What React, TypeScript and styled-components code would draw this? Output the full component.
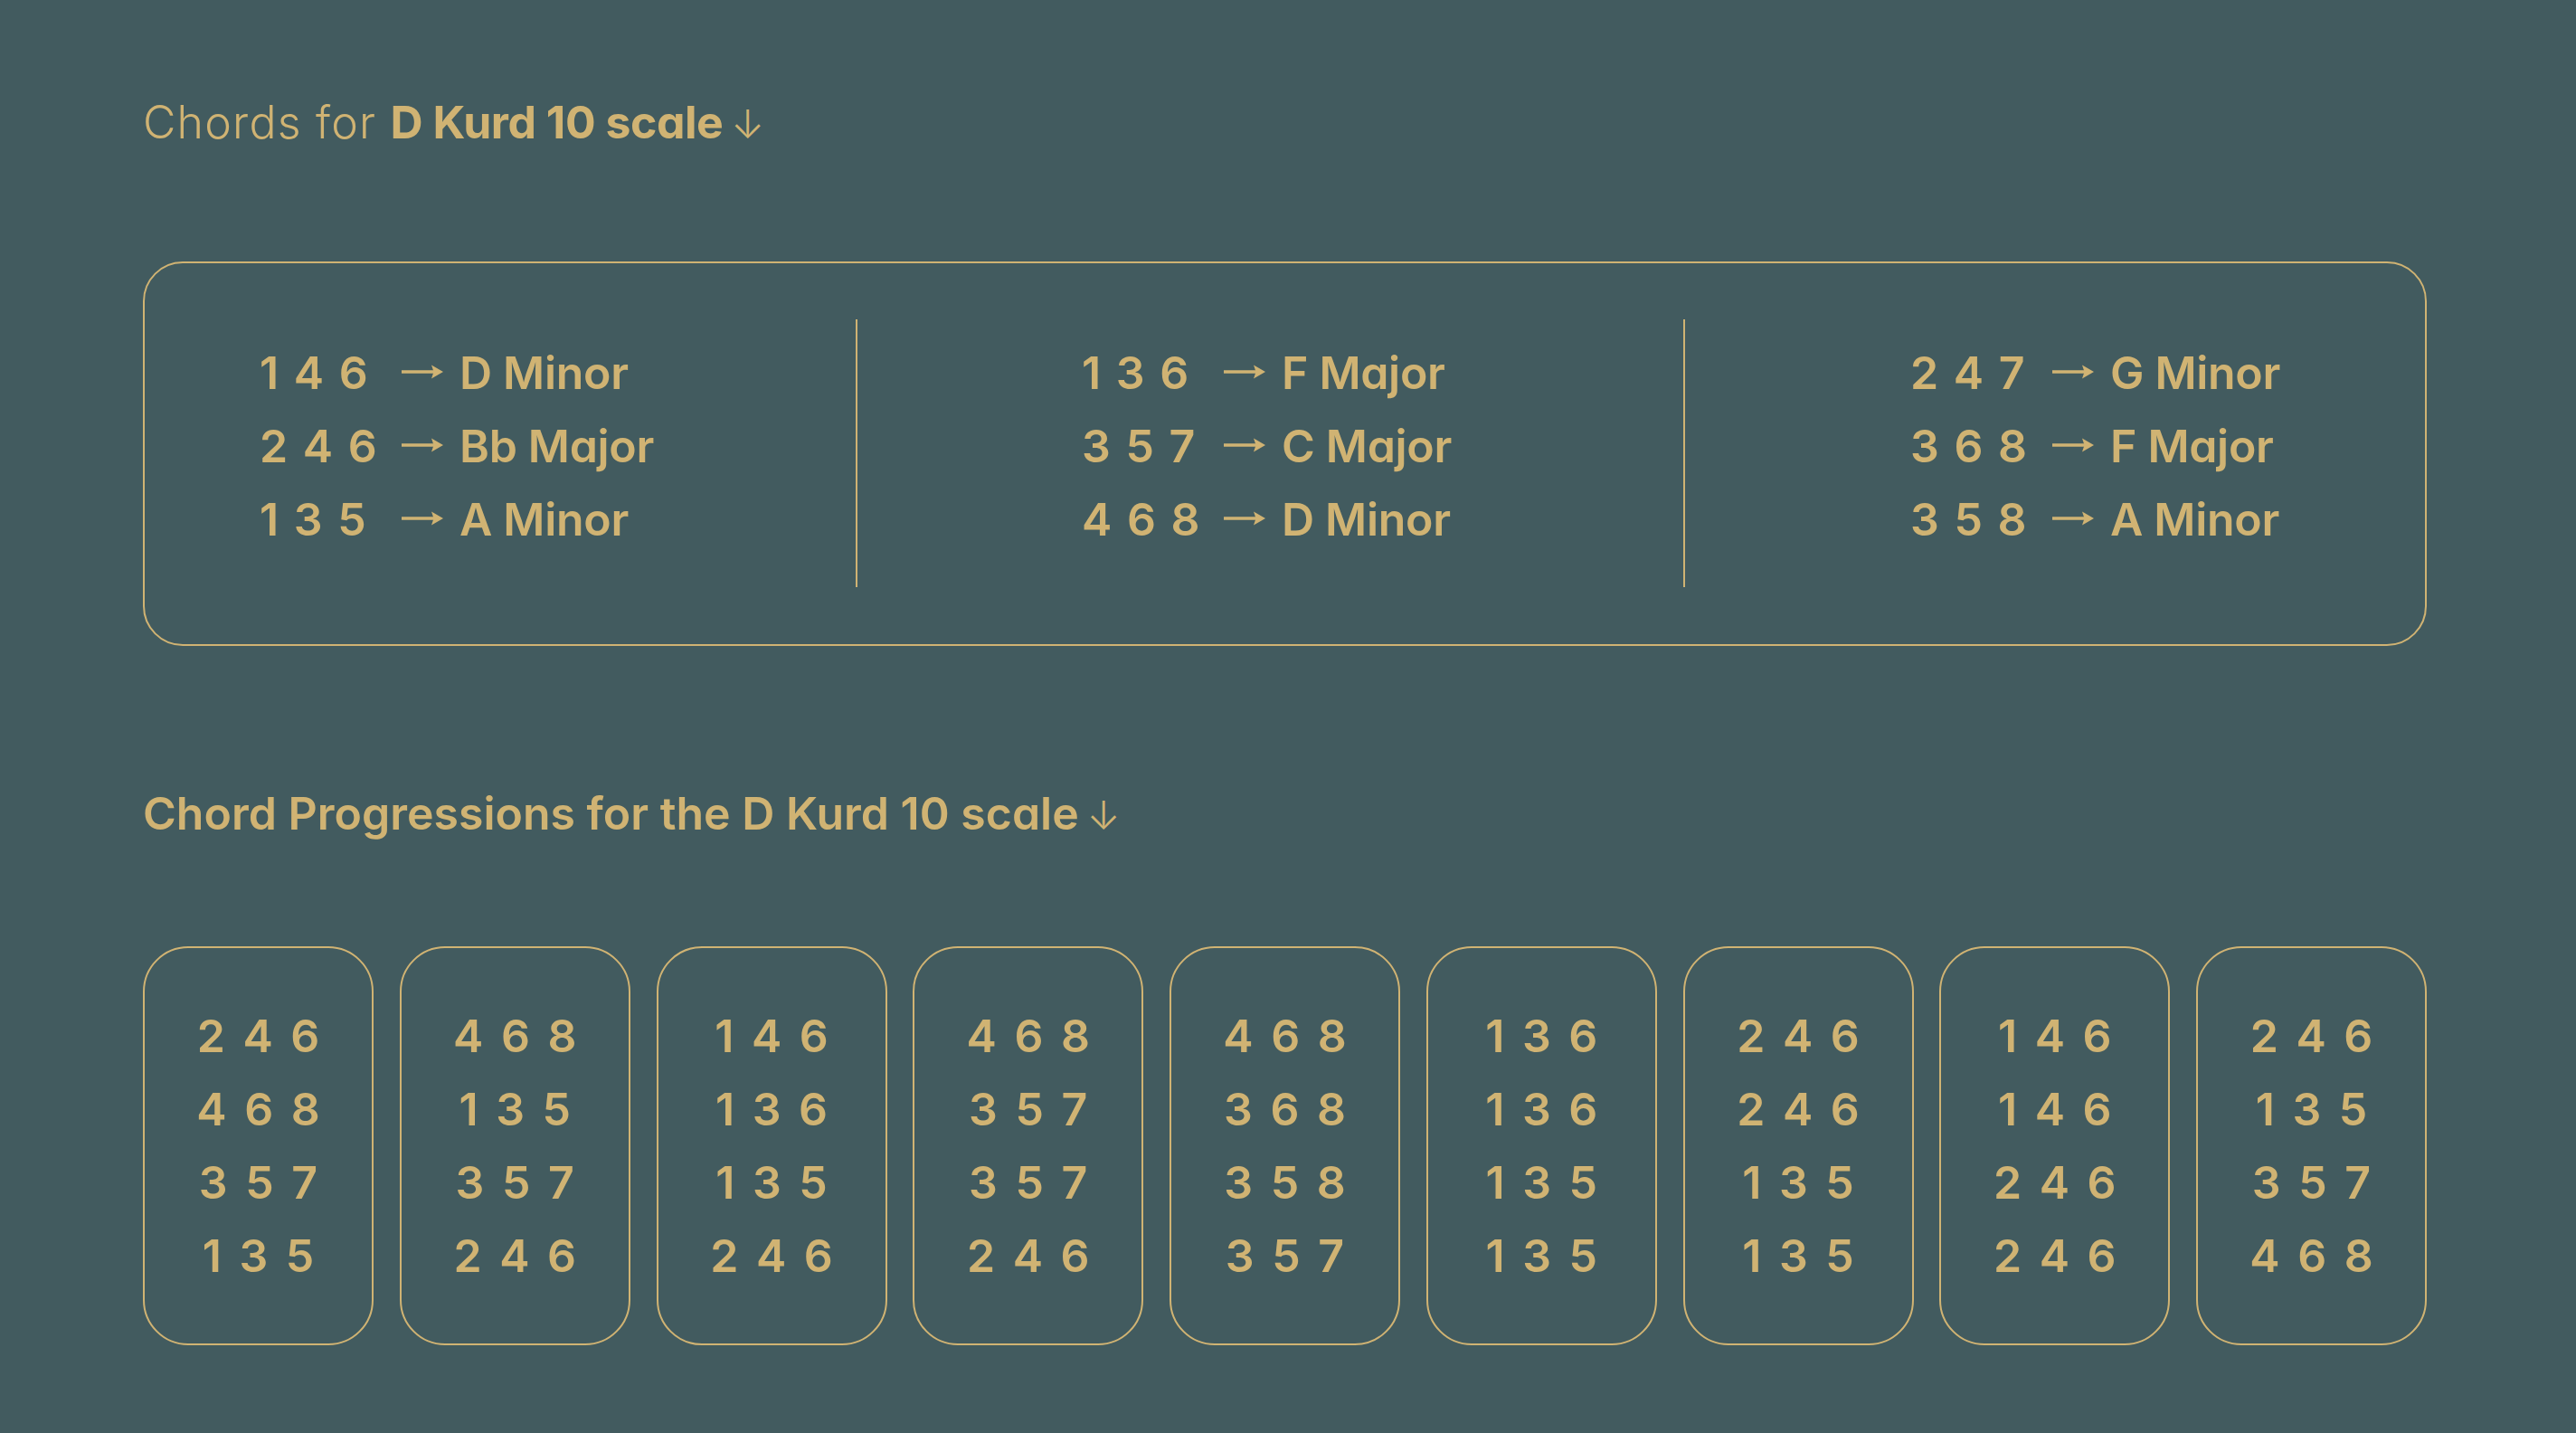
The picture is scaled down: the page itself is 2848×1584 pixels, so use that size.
import React from "react";
import styled, { createGlobalStyle } from "styled-components";

const GOLD = "#d0b373";
const BG = "#425b5f";

const GlobalStyle = createGlobalStyle`
  html, body { margin: 0; padding: 0; background: ${BG}; }
  body {
    font-family: Inter, "Noto Sans", sans-serif;
    color: ${GOLD};
    font-feature-settings: "cv11" 1;
  }
`;

const Page = styled.main`
  width: 2848px;
  height: 1584px;
  box-sizing: border-box;
  padding: 110px 165px 0 158px;
  display: flex;
  flex-direction: column;
`;

const Heading = styled.h2<{ $weight: number; $gap: number; $spacing: number }>`
  margin: ${(p) => p.$gap}px 0 0 0;
  height: 50px;
  font-size: 50px;
  line-height: 50px;
  font-weight: ${(p) => p.$weight};
  letter-spacing: ${(p) => p.$spacing}px;
  white-space: nowrap;
`;

const Strong = styled.strong`
  font-weight: 700;
  letter-spacing: -0.5px;
`;

const DownArrow = styled.span`
  font-weight: 300;
  font-size: 44px;
  line-height: 0;
  margin-left: 9px;
`;

const ChordBox = styled.section`
  margin-top: 129px;
  height: 425px;
  box-sizing: border-box;
  border: 2px solid ${GOLD};
  border-radius: 44px;
  padding: 62px 0 63px 127px;
  display: grid;
  grid-template-columns: 659px 2px 913px 2px 1fr;
`;

const ChordColumn = styled.div<{ $inset: number }>`
  padding: 19px 0 0 ${(p) => p.$inset}px;
  display: flex;
  flex-direction: column;
`;

const Divider = styled.div`
  background: ${GOLD};
  width: 2px;
`;

const ChordRow = styled.div`
  display: grid;
  grid-template-columns: 157px 64px auto;
  align-items: center;
  font-size: 50px;
  line-height: 81px;
  white-space: nowrap;
`;

const Degrees = styled.span`
  font-weight: 600;
  word-spacing: 4px;
`;

const ArrowIcon = styled.svg`
  display: block;
  width: 46px;
  height: 20px;
  margin-top: -4px;
`;

const ChordName = styled.span`
  font-weight: 600;
  letter-spacing: -0.3px;
`;

const CardRow = styled.section`
  margin-top: 122px;
  display: flex;
  justify-content: space-between;
`;

const Card = styled.div`
  width: 255px;
  height: 441px;
  box-sizing: border-box;
  border: 2px solid ${GOLD};
  border-radius: 50px;
  display: flex;
  flex-direction: column;
  align-items: center;
  justify-content: center;
`;

const CardLine = styled.div`
  font-size: 50px;
  line-height: 81px;
  font-weight: 600;
  word-spacing: 7px;
  white-space: nowrap;
`;

const RightArrow = () => (
  <ArrowIcon viewBox="0 0 46 20" aria-hidden="true">
    <line x1="0" y1="10" x2="38" y2="10" stroke={GOLD} strokeWidth="3.4" />
    <path d="M33 2.5 L46 10 L33 17.5 L35.5 10 Z" fill={GOLD} />
  </ArrowIcon>
);

const chordColumns: { inset: number; rows: [string, string][] }[] = [
  { inset: 0, rows: [["1 4 6", "D Minor"], ["2 4 6", "Bb Major"], ["1 3 5", "A Minor"]] },
  { inset: 248, rows: [["1 3 6", "F Major"], ["3 5 7", "C Major"], ["4 6 8", "D Minor"]] },
  { inset: 249, rows: [["2 4 7", "G Minor"], ["3 6 8", "F Major"], ["3 5 8", "A Minor"]] },
];

const progressions: string[][] = [
  ["2 4 6", "4 6 8", "3 5 7", "1 3 5"],
  ["4 6 8", "1 3 5", "3 5 7", "2 4 6"],
  ["1 4 6", "1 3 6", "1 3 5", "2 4 6"],
  ["4 6 8", "3 5 7", "3 5 7", "2 4 6"],
  ["4 6 8", "3 6 8", "3 5 8", "3 5 7"],
  ["1 3 6", "1 3 6", "1 3 5", "1 3 5"],
  ["2 4 6", "2 4 6", "1 3 5", "1 3 5"],
  ["1 4 6", "1 4 6", "2 4 6", "2 4 6"],
  ["2 4 6", "1 3 5", "3 5 7", "4 6 8"],
];

export default function App() {
  return (
    <>
      <GlobalStyle />
      <Page>
        <Heading $weight={300} $gap={0} $spacing={1.2}>
          Chords for <Strong>D Kurd 10 scale</Strong>
          <DownArrow>↓</DownArrow>
        </Heading>
        <ChordBox>
          {chordColumns.map((col, i) => (
            <React.Fragment key={i}>
              {i > 0 && <Divider />}
              <ChordColumn $inset={col.inset}>
                {col.rows.map(([deg, name]) => (
                  <ChordRow key={deg + name}>
                    <Degrees>{deg}</Degrees>
                    <RightArrow />
                    <ChordName>{name}</ChordName>
                  </ChordRow>
                ))}
              </ChordColumn>
            </React.Fragment>
          ))}
        </ChordBox>
        <Heading $weight={600} $gap={160} $spacing={0}>
          Chord Progressions for the D Kurd 10 scale
          <DownArrow>↓</DownArrow>
        </Heading>
        <CardRow>
          {progressions.map((p, i) => (
            <Card key={i}>
              {p.map((line, j) => (
                <CardLine key={j}>{line}</CardLine>
              ))}
            </Card>
          ))}
        </CardRow>
      </Page>
    </>
  );
}
